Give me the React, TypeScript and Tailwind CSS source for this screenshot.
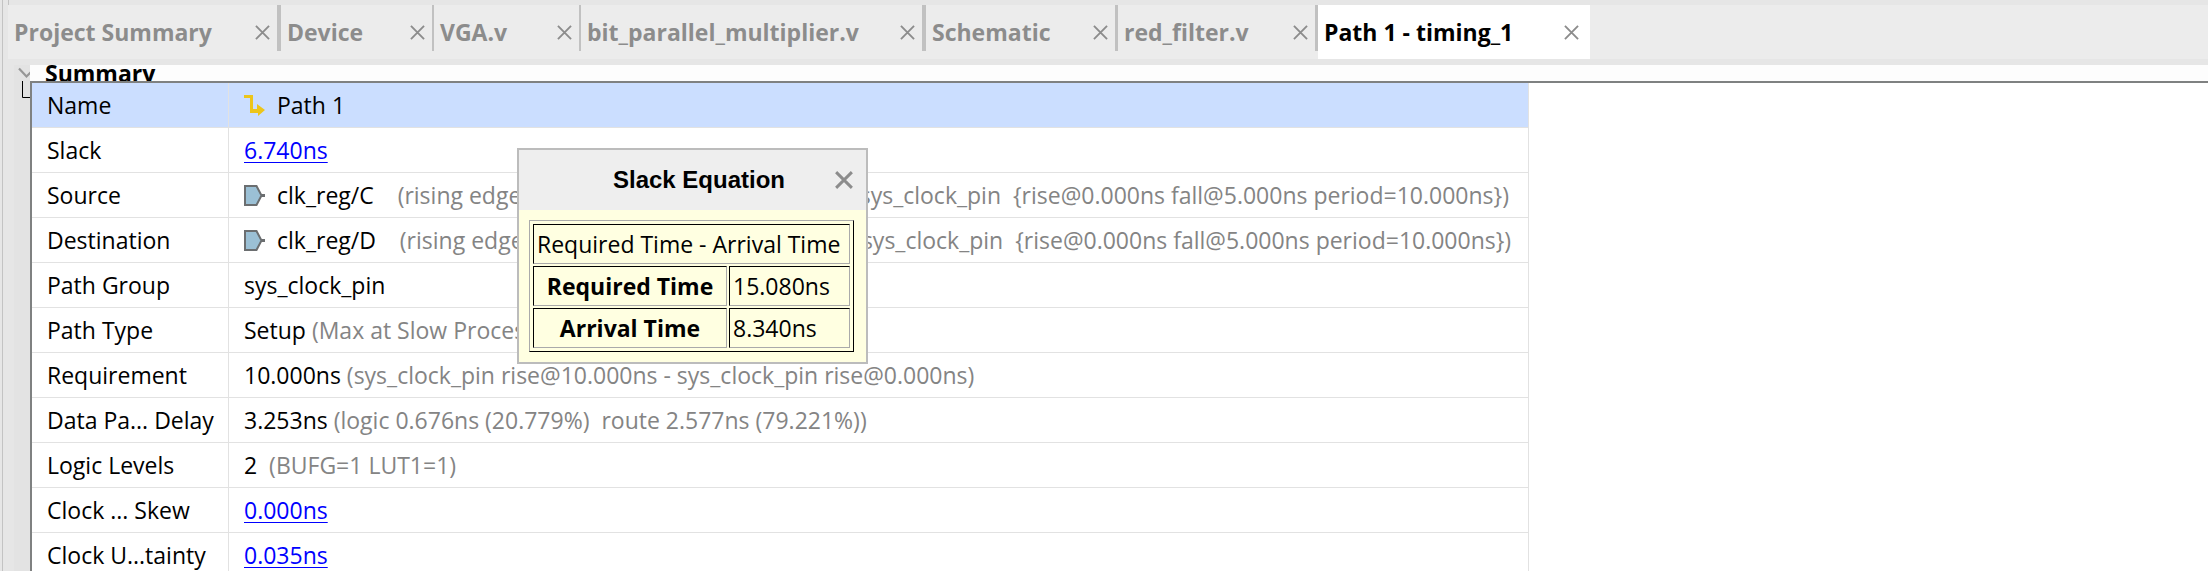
import type { ReactNode } from "react";

type Tab = { title: string; width: string; divider: string; active?: boolean };

const tabs: Tab[] = [
  { title: "Project Summary", width: "w-[273px]", divider: "w-1 bg-[#c1c1c1]" },
  { title: "Device", width: "w-[153px]", divider: "w-0.5 bg-[#c1c1c1]" },
  { title: "VGA.v", width: "w-[147px]", divider: "w-0.5 bg-[#c1c1c1]" },
  { title: "bit_parallel_multiplier.v", width: "w-[345px]", divider: "w-1 bg-[#c1c1c1]" },
  { title: "Schematic", width: "w-[192px]", divider: "w-[3px] bg-[#c1c1c1]" },
  { title: "red_filter.v", width: "w-[200px]", divider: "w-[3px] bg-[#c1c1c1]" },
  { title: "Path 1 - timing_1", width: "w-[272px]", divider: "w-1 bg-white", active: true },
];

function CloseIcon({ className, strokeWidth }: { className: string; strokeWidth: number }) {
  return (
    <svg viewBox="0 0 16 16" className={className} fill="none" stroke="currentColor" strokeWidth={strokeWidth} aria-hidden="true">
      <path d="M1 1 15 15M15 1 1 15" />
    </svg>
  );
}

function PathIcon() {
  return (
    <svg viewBox="0 0 21 21" className="size-[21px] shrink-0" aria-hidden="true">
      <path d="M0 0H9V14H13V9L21 15L14 21V18H6V3H0Z" fill="#ecc51b" />
    </svg>
  );
}

function PinIcon() {
  return (
    <svg viewBox="0 0 21 21" className="size-[21px] shrink-0" aria-hidden="true">
      <path d="M1 1H12.500L17.500 10.500L12.500 20H1Z" fill="#9bc0d5" stroke="#6b6e70" strokeWidth="2" />
      <path d="M17 10.500H21" stroke="#6b6e70" strokeWidth="3" />
    </svg>
  );
}

function Note({ children }: { children: ReactNode }) {
  return <span className="text-[#848484]">{children}</span>;
}

function ValueLink({ children }: { children: ReactNode }) {
  return (
    <a href="#details" className="text-[#0000ff] underline decoration-1 underline-offset-3">
      {children}
    </a>
  );
}

const clockNote = "(rising edge-triggered cell FDRE clocked by  sys_clock_pin  {rise@0.000ns fall@5.000ns period=10.000ns})";

const rows: { label: string; icon?: ReactNode; value: ReactNode }[] = [
  { label: "Name", icon: <PathIcon />, value: "Path 1" },
  { label: "Slack", value: <ValueLink>6.740ns</ValueLink> },
  { label: "Source", icon: <PinIcon />, value: <>clk_reg/C{"    "}<Note>{clockNote}</Note></> },
  { label: "Destination", icon: <PinIcon />, value: <>clk_reg/D{"    "}<Note>{clockNote}</Note></> },
  { label: "Path Group", value: "sys_clock_pin" },
  { label: "Path Type", value: <>Setup <Note>(Max at Slow Process Corner)</Note></> },
  { label: "Requirement", value: <>10.000ns <Note>(sys_clock_pin rise@10.000ns - sys_clock_pin rise@0.000ns)</Note></> },
  { label: "Data Pa... Delay", value: <>3.253ns <Note>{"(logic 0.676ns (20.779%)  route 2.577ns (79.221%))"}</Note></> },
  { label: "Logic Levels", value: <>2{"  "}<Note>(BUFG=1 LUT1=1)</Note></> },
  { label: "Clock ... Skew", value: <ValueLink>0.000ns</ValueLink> },
  { label: "Clock U...tainty", value: <ValueLink>0.035ns</ValueLink> },
];

function SlackEquation() {
  const cell = "h-10 border border-t-black border-l-black border-r-[#aaaaaa] border-b-[#aaaaaa] px-[3px] py-0";
  return (
    <section role="dialog" aria-labelledby="slack-title" className="absolute top-[148px] left-[517px] w-[351px] border-2 border-[#bcbcbc] bg-[#ffffe1]">
      <header className="flex h-[60px] items-center bg-[#eeeeee] pr-[13px] pl-11">
        <h2 id="slack-title" className="flex-1 text-center font-['Liberation_Sans',sans-serif] text-[24px] leading-7 font-bold">
          Slack Equation
        </h2>
        <button type="button" aria-label="Close slack equation" className="text-[#8c8c8c]">
          <CloseIcon className="size-[18px]" strokeWidth={2.6} />
        </button>
      </header>
      <div className="py-2.5 pr-3 pl-2.5">
        <table className="w-full table-fixed border-separate border-spacing-0.5 border border-t-[#aaaaaa] border-l-[#aaaaaa] border-r-black border-b-black p-px text-[23px] leading-7">
          <colgroup>
            <col className="w-[194px]" />
            <col />
          </colgroup>
          <tbody>
            <tr><td colSpan={2} className={`${cell} whitespace-nowrap`}>Required Time - Arrival Time</td></tr>
            <tr><th scope="row" className={cell}>Required Time</th><td className={cell}>15.080ns</td></tr>
            <tr><th scope="row" className={cell}>Arrival Time</th><td className={cell}>8.340ns</td></tr>
          </tbody>
        </table>
      </div>
    </section>
  );
}

export default function App() {
  return (
    <div className="relative flex h-screen flex-col overflow-hidden bg-[#e6e6e6] font-['Open_Sans',sans-serif] text-black">
      <div className="ml-0.5 flex min-h-0 flex-1 flex-col border-l border-[#c3c3c3] pl-[5px]">
        <div className="h-[5px] shrink-0 border-l border-[#c3c3c3]" />
        <nav aria-label="Documents" className="flex h-[54px] shrink-0 bg-[#ececec]">
          {tabs.map((tab) => (
            <div key={tab.title} className={`flex shrink-0 ${tab.width} ${tab.active ? "bg-white text-black" : "text-[#8c8c8c]"}`}>
              <div className="flex min-w-0 flex-1 items-center justify-between pr-[7px] pl-1.5">
                <button type="button" className="text-[23px] leading-7 font-bold whitespace-nowrap">{tab.title}</button>
                <button type="button" aria-label={`Close ${tab.title}`} className="text-[#8c8c8c]">
                  <CloseIcon className="size-[15px]" strokeWidth={2} />
                </button>
              </div>
              <span className={`h-[46px] ${tab.divider}`} />
            </div>
          ))}
        </nav>
        <main className="mt-1.5 ml-1.5 flex min-h-0 flex-1 bg-[#e3e3e3]">
          <div className="w-4 shrink-0">
            <svg viewBox="0 0 16 33" className="h-[33px] w-4" fill="none" aria-hidden="true">
              <path d="M5 3.500 12.500 11.500 17 7" stroke="#969696" strokeWidth="2.200" />
              <path d="M8.500 16V32.500H16" stroke="#000000" strokeWidth="1" />
            </svg>
          </div>
          <div className="flex min-w-0 flex-1 flex-col">
            <h1 className="h-4 shrink-0 overflow-hidden bg-[#fdfdfd] pl-[15px] text-[23px] leading-4 font-bold">Summary</h1>
            <div className="min-h-0 flex-1 overflow-hidden border-t-2 border-l-2 border-[#7f8181] bg-white">
              <table className="w-[1497px] table-fixed border-separate border-spacing-0 text-[23px] leading-7">
                <colgroup>
                  <col className="w-[197px]" />
                  <col />
                </colgroup>
                <tbody>
                  {rows.map((row, i) => (
                    <tr key={row.label} className={i === 0 ? "bg-[#cbdeff]" : "bg-white"}>
                      <th scope="row" className="h-[45px] border-r border-b border-[#e2e2e2] py-0 pl-[15px] text-left font-normal whitespace-nowrap">{row.label}</th>
                      <td className="border-r border-b border-[#e2e2e2] py-0 pl-[15px]">
                        <div className="flex items-center gap-3">
                          {row.icon}
                          <span className="whitespace-pre">{row.value}</span>
                        </div>
                      </td>
                    </tr>
                  ))}
                </tbody>
              </table>
            </div>
          </div>
        </main>
      </div>
      <SlackEquation />
    </div>
  );
}
